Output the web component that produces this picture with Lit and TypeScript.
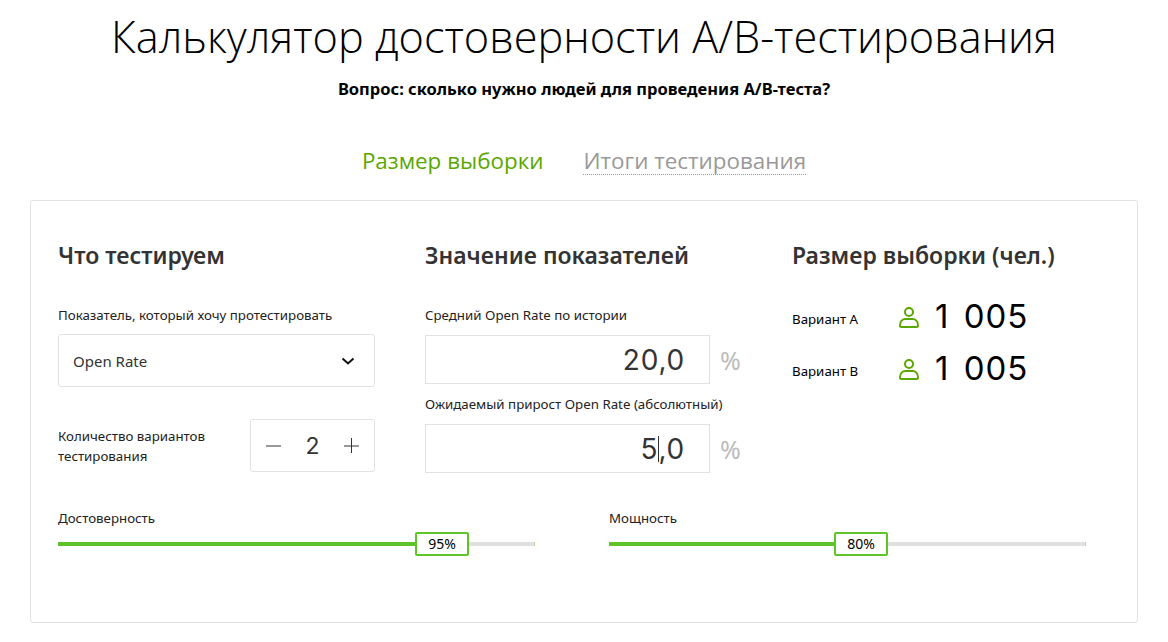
import { LitElement, html, css } from "lit";
import { customElement } from "lit/decorators.js";

const person = html`<svg class="person" viewBox="0 0 20 22" width="20" height="22" fill="none" stroke="#5aa700" stroke-width="2"><circle cx="10" cy="6" r="4"/><path d="M1 19.500c0-4 2.500-6.500 5.500-6.500h7c3 0 5.500 2.500 5.500 6.500c0 1-.5 1.500-1.500 1.500h-15c-1 0-1.500-.5-1.500-1.500z"/></svg>`;

@customElement("app-root")
export class AppRoot extends LitElement {
  static styles = css`
    :host { display: block; width: 1168px; height: 642px; overflow: hidden; background: #fff; font-family: "Noto Sans", sans-serif; color: #000; }
    h1 { margin: 0; padding-top: 6px; height: 62px; line-height: 62px; text-align: center; font-family: "Open Sans", sans-serif; font-weight: 300; font-size: 43.3px; color: #000; }
    .q { margin: 0; padding-top: 10px; height: 22px; line-height: 22px; text-align: center; font-weight: 700; font-size: 16.500px; }
    .tabs { display: flex; justify-content: center; gap: 40px; padding-top: 46px; height: 39px; margin-bottom: 15px; font-size: 22.400px; font-family: "Open Sans", sans-serif; line-height: 30px; }
    .tabs .on { color: #5aa700; }
    .tabs .off { color: #999; height: 28px; border-bottom: 1px dotted #999; }
    .card { box-sizing: border-box; margin: 0 30px; height: 423px; border: 1px solid #e2e2e2; border-radius: 3px; padding: 39px 27px 0; }
    .cols { display: grid; grid-template-columns: 367px 367px 1fr; height: 269px; }
    h2 { margin: 0; font-size: 23px; line-height: 30px; font-weight: 600; color: #333; }
    .lbl { font-size: 13.300px; line-height: 18px; color: #222; }
    .c1 { width: 317px; }
    .c1 .lbl1 { margin-top: 36px; }
    .select { box-sizing: border-box; margin-top: 10px; height: 53px; border: 1px solid #e2e2e2; border-radius: 3px; display: flex; align-items: center; justify-content: space-between; padding: 0 19px 0 14px; font-size: 15px; color: #333; }
    .row { display: flex; justify-content: space-between; align-items: center; margin-top: 32px; }
    .row .lbl { line-height: 20px; width: 170px; }
    .stepper { box-sizing: border-box; width: 125px; height: 53px; border: 1px solid #e2e2e2; border-radius: 3px; display: flex; align-items: center; justify-content: space-between; padding: 0 15px 0 15px; font-family: "Inter", sans-serif; font-size: 23px; color: #333; }
    .c2 .lbl1 { margin-top: 36px; }
    .c2 .lbl2 { margin-top: 11px; }
    .ifield { display: flex; align-items: center; margin-top: 11px; gap: 10px; }
    .input { box-sizing: border-box; width: 285px; height: 49px; border: 1px solid #e2e2e2; padding-right: 24px; display: flex; align-items: center; justify-content: flex-end; font-family: "Inter", sans-serif; font-size: 28px; letter-spacing: 0.8px; color: #333; }
    .pct { font-size: 25px; color: #bbb; }
    .caret { display: inline-block; width: 1px; height: 26px; margin: 0 -1px 0 0; background: #333; }
    .res { display: flex; align-items: center; height: 52px; }
    .res .lbl { width: 107px; color: #000; }
    .person { margin-top: -4px; }
    .res .num { font-family: "Inter", sans-serif; font-size: 33px; letter-spacing: 1px; word-spacing: 4px; line-height: 44px; margin-top: -6px; color: #000; margin-left: 16px; }
    .c3 .res:first-of-type { margin-top: 23px; }
    .sliders { display: grid; grid-template-columns: 477px 477px; column-gap: 74px; }
    .slider .lbl { display: block; margin-bottom: 6px; }
    .track { position: relative; height: 4px; margin-top: 15px; background: #e0e0e0; }
    .track::after { content: ""; position: absolute; right: 0; top: 0; width: 1px; height: 100%; background: #b5d9a0; }
    .fill { height: 100%; background: #5fc32a; }
    .thumb { position: absolute; top: -10px; box-sizing: border-box; width: 54px; height: 24px; background: #fff; border: 2px solid #5fc32a; border-radius: 2px; text-align: center; font-size: 14px; line-height: 20px; color: #000; }
  `;

  private slider(label: string, value: string, fill: number, thumb: number) {
    return html`<div class="slider">
      <span class="lbl">${label}</span>
      <div class="track">
        <div class="fill" style="width:${fill}px"></div>
        <div class="thumb" style="left:${thumb}px">${value}</div>
      </div>
    </div>`;
  }

  render() {
    return html`
      <h1>Калькулятор достоверности А/В-тестирования</h1>
      <p class="q">Вопрос: сколько нужно людей для проведения А/В-теста?</p>
      <div class="tabs"><span class="on">Размер выборки</span><span class="off">Итоги тестирования</span></div>
      <div class="card">
        <div class="cols">
          <div class="c1">
            <h2>Что тестируем</h2>
            <div class="lbl lbl1">Показатель, который хочу протестировать</div>
            <div class="select">Open Rate
              <svg width="14" height="8" viewBox="0 0 14 8" fill="none" stroke="#111" stroke-width="2"><path d="M1.500 1.500l5.500 5 5.500-5"/></svg>
            </div>
            <div class="row">
              <div class="lbl">Количество вариантов тестирования</div>
              <div class="stepper">
                <svg width="15" height="15" viewBox="0 0 15 15" stroke="#333"><path d="M0 8h15"/></svg>
                <span>2</span>
                <svg width="15" height="15" viewBox="0 0 15 15" stroke="#333"><path d="M0 8h15M7.500 0v15"/></svg>
              </div>
            </div>
          </div>
          <div class="c2">
            <h2>Значение показателей</h2>
            <div class="lbl lbl1">Средний Open Rate по истории</div>
            <div class="ifield"><div class="input">20,0</div><span class="pct">%</span></div>
            <div class="lbl lbl2">Ожидаемый прирост Open Rate (абсолютный)</div>
            <div class="ifield"><div class="input">5<span class="caret"></span>,0</div><span class="pct">%</span></div>
          </div>
          <div class="c3">
            <h2>Размер выборки (чел.)</h2>
            <div class="res"><span class="lbl">Вариант А</span>${person}<span class="num">1 005</span></div>
            <div class="res"><span class="lbl">Вариант В</span>${person}<span class="num">1 005</span></div>
          </div>
        </div>
        <div class="sliders">
          ${this.slider("Достоверность", "95%", 360, 357)}
          ${this.slider("Мощность", "80%", 228, 225)}
        </div>
      </div>
    `;
  }
}
